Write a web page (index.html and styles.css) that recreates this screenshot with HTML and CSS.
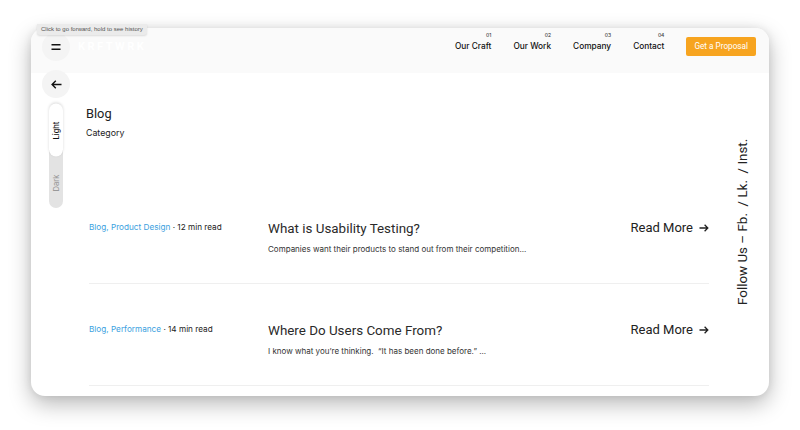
FILE: index.html
```html
<!DOCTYPE html>
<html lang="en">
<head>
<meta charset="utf-8">
<title>Blog</title>
<link rel="stylesheet" href="styles.css">
</head>
<body>
<div class="stage">
  <div class="window">
    <header class="topbar">
      <div class="brand">
        <button class="round menu" aria-label="Menu">
          <svg width="10" height="6" viewBox="0 0 10 6"><path d="M0.5 0.75H9.5M0.5 5.25H9.5" stroke="#111" stroke-width="1.3"/></svg>
        </button>
        <span class="logo">KRFTWRK</span>
      </div>
      <nav class="nav">
        <a class="nav-item">Our Craft<sup>01</sup></a>
        <a class="nav-item">Our Work<sup>02</sup></a>
        <a class="nav-item">Company<sup>03</sup></a>
        <a class="nav-item">Contact<sup>04</sup></a>
        <a class="cta">Get a Proposal</a>
      </nav>
    </header>
    <div class="body">
      <aside class="side">
        <button class="round back" aria-label="Back">
          <svg width="11" height="9" viewBox="0 0 11 9"><path d="M10.5 4.5H1.2M4.8 0.8L1.1 4.5L4.8 8.2" fill="none" stroke="#111" stroke-width="1.4"/></svg>
        </button>
        <div class="theme">
          <span class="opt on">Light</span>
          <span class="opt">Dark</span>
        </div>
      </aside>
      <main class="main">
        <h1 class="h1">Blog</h1>
        <p class="sub">Category</p>
        <div class="posts">
          <article class="post">
            <p class="meta"><span class="cat">Blog, Product Design</span> · 12 min read</p>
            <div class="content">
              <h2 class="title">What is Usability Testing?</h2>
              <p class="excerpt">Companies want their products to stand out from their competition...</p>
            </div>
            <a class="more">Read More <svg width="10" height="8" viewBox="0 0 10 8"><path d="M0.5 4H8.8M5.6 0.8L8.8 4L5.6 7.2" fill="none" stroke="#222" stroke-width="1.3"/></svg></a>
          </article>
          <article class="post">
            <p class="meta"><span class="cat">Blog, Performance</span> · 14 min read</p>
            <div class="content">
              <h2 class="title">Where Do Users Come From?</h2>
              <p class="excerpt">I know what you’re thinking. &nbsp;“It has been done before.” ...</p>
            </div>
            <a class="more">Read More <svg width="10" height="8" viewBox="0 0 10 8"><path d="M0.5 4H8.8M5.6 0.8L8.8 4L5.6 7.2" fill="none" stroke="#222" stroke-width="1.3"/></svg></a>
          </article>
        </div>
      </main>
      <div class="follow">
        <span class="follow-text">Follow Us – Fb. &nbsp;/ Lk. &nbsp;/ Inst.</span>
      </div>
    </div>
  </div>
  <div class="tooltip">Click to go forward, hold to see history</div>
</div>
</body>
</html>
```
FILE: styles.css
```css
* { box-sizing: border-box; }
html, body { margin: 0; padding: 0; background: #fff; }
body { width: 800px; height: 430px; overflow: hidden; font-family: Inter, "Liberation Sans", sans-serif; color: #222; }
p, h1, h2 { margin: 0; font-weight: normal; }
a { color: inherit; text-decoration: none; }
button { border: 0; padding: 0; font: inherit; }

.stage { position: relative; padding: 28px 31px; }
.window {
  width: 738px; height: 368px; background: #fff; border-radius: 14px; overflow: hidden;
  box-shadow: 0 8px 22px rgba(0,0,0,0.28), 0 0 8px rgba(0,0,0,0.08);
  display: flex; flex-direction: column;
}
.tooltip {
  position: absolute; left: 37px; top: 24px; height: 11px; padding: 0 4px;
  background: #ebebeb; color: #555; font-family: "Liberation Sans", sans-serif; font-size: 6px; line-height: 11px;
  border-radius: 0 0 3px 3px; box-shadow: 0 1px 2px rgba(0,0,0,0.12);
}

.topbar { height: 45px; flex: none; background: #fafafa; display: flex; align-items: center; justify-content: space-between; padding: 0 13px 9px 11px; }
.brand { display: flex; align-items: center; gap: 8px; }
.round { width: 28px; height: 28px; border-radius: 50%; background: #f4f4f4; display: flex; align-items: center; justify-content: center; }
.menu { margin-top: 2px; }
.logo { color: #fff; font-family: Roboto, sans-serif; font-weight: 700; font-size: 11px; letter-spacing: 2.5px; }
.nav { display: flex; align-items: center; gap: 22px; }
.nav-item { position: relative; font-size: 8.3px; font-weight: 500; color: #111; }
.nav-item sup { position: absolute; right: 0; top: -8px; font-size: 5px; color: #444; line-height: 1; }
.cta { background: #f7a41f; color: #fff; font-family: Roboto, sans-serif; font-size: 8.2px; height: 19px; line-height: 19px; padding: 0 8px; border-radius: 2px; margin-left: 0; }

.body { flex: 1; display: flex; min-height: 0; }
.side { width: 55px; flex: none; padding-left: 11px; }
.back { margin-top: -3px; }
.theme { width: 14px; height: 104px; margin: 6px 0 0 7px; border-radius: 7px; background: #e3e3e3; display: flex; flex-direction: column; }
.opt { height: 52px; display: flex; align-items: center; justify-content: center; writing-mode: vertical-rl; transform: rotate(180deg); font-size: 7.5px; font-weight: 500; color: #999; }
.opt.on { background: #fff; color: #111; border-radius: 7px; box-shadow: 0 1px 3px rgba(0,0,0,0.15); height: 53px; }

.main { flex: 1; padding-top: 33px; min-width: 0; }
.h1 { font-family: Roboto, sans-serif; font-size: 12.8px; line-height: 16px; color: #222; }
.sub { font-size: 8.8px; line-height: 12px; margin-top: 5px; color: #222; }
.posts { margin: 43px 0 0 3px; width: 620px; }
.post { display: flex; align-items: flex-start; padding: 38px 0 28px; border-bottom: 1px solid #efefef; }
.meta { width: 179px; flex: none; font-size: 8.2px; line-height: 12px; padding-top: 1px; color: #222; }
.cat { color: #3c9fe0; }
.content { flex: 1; }
.title { font-family: Roboto, sans-serif; font-size: 13.4px; line-height: 18px; color: #2a2a2a; }
.excerpt { font-size: 8px; line-height: 12px; margin-top: 5px; color: #333; }
.more { font-family: Roboto, sans-serif; font-size: 13px; line-height: 18px; color: #222; display: flex; align-items: center; gap: 6px; margin-top: -1px; }

.follow { width: 60px; flex: none; display: flex; justify-content: center; padding: 64px 0 0 6px; }
.follow-text { writing-mode: vertical-rl; transform: rotate(180deg); font-family: Roboto, sans-serif; font-size: 13.4px; color: #222; white-space: nowrap; height: 168px; }
```
